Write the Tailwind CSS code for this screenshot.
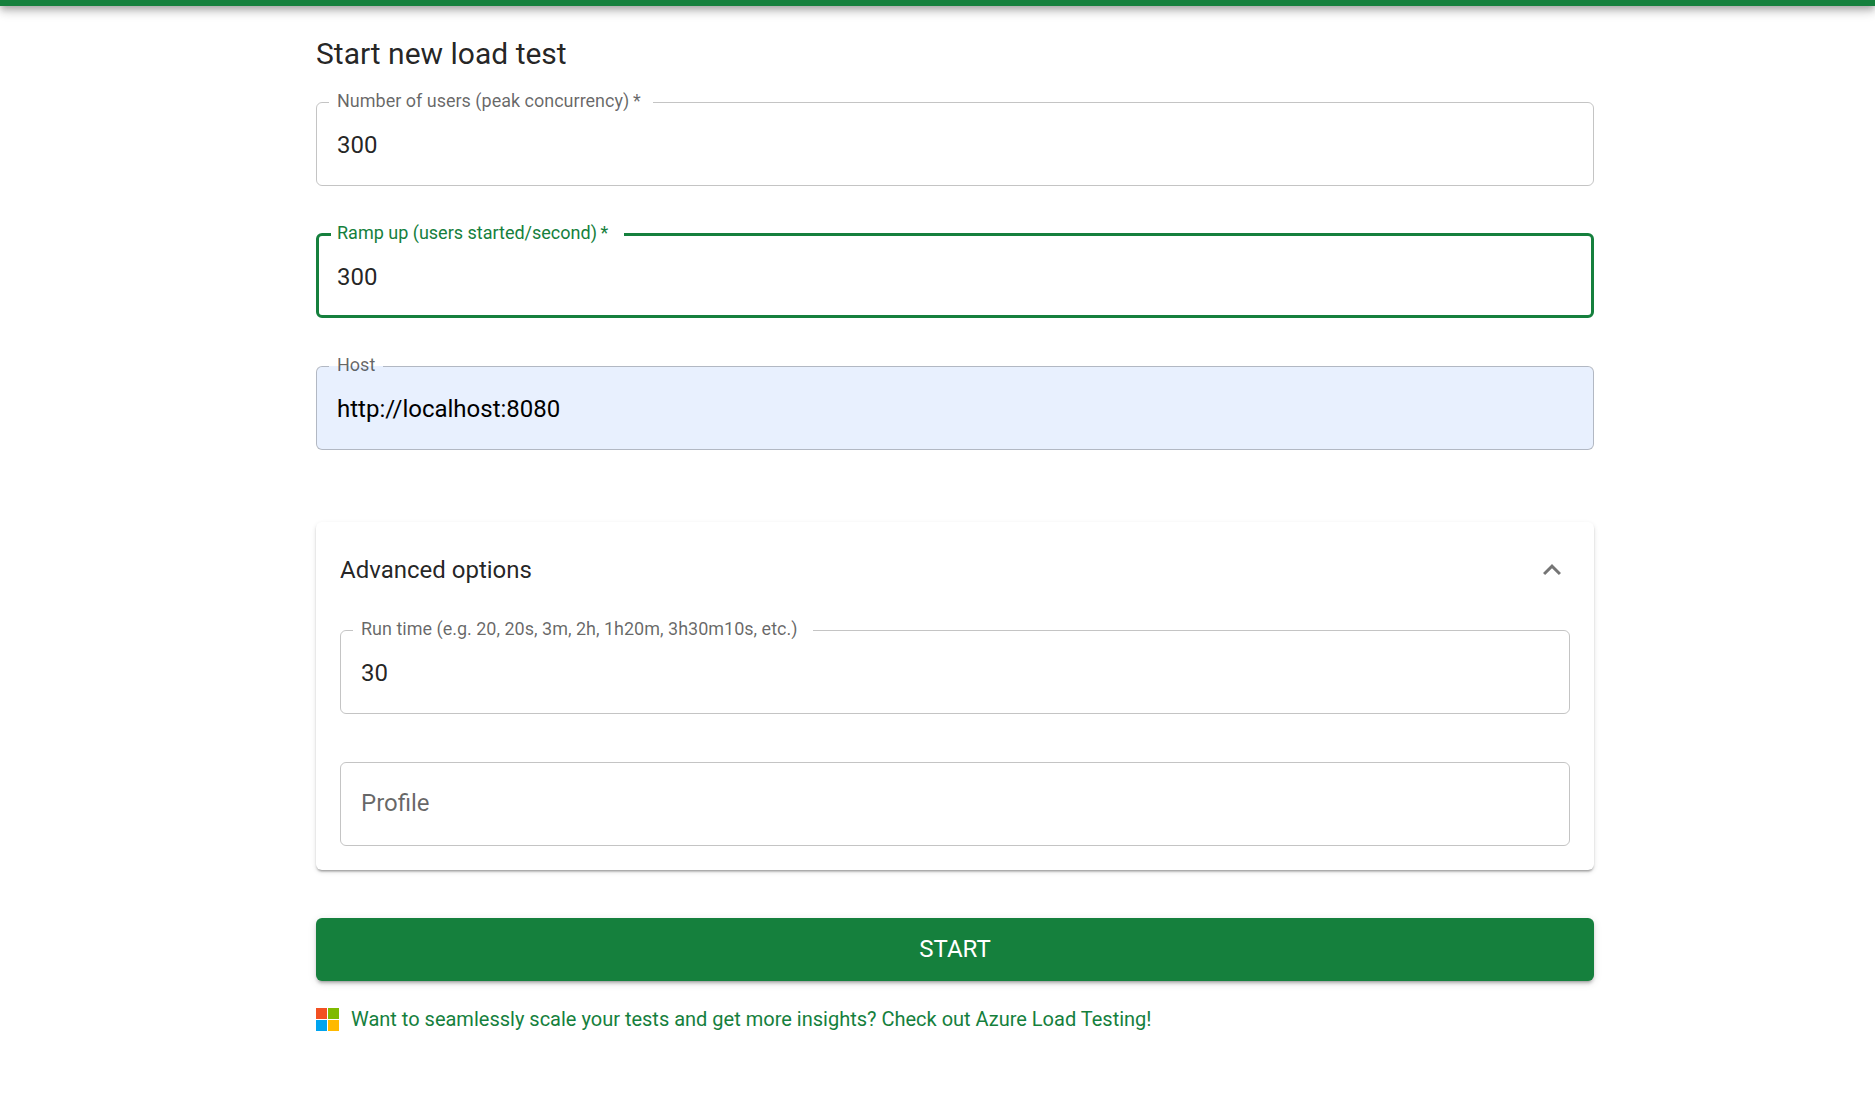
<!DOCTYPE html>
<html lang="en">
<head>
<meta charset="utf-8">
<meta name="viewport" content="width=device-width, initial-scale=1">
<title>Locust</title>
<script src="https://cdn.jsdelivr.net/npm/@tailwindcss/browser@4"></script>
</head>
<body class="min-h-screen bg-white font-['Roboto',sans-serif] text-2xl text-black/87">
<!-- App bar, mostly scrolled out of view -->
<header class="-mt-[90px] h-24 bg-[#15803d] shadow-[0_3px_6px_-1px_rgba(0,0,0,0.2),0_6px_8px_0_rgba(0,0,0,0.14),0_2px_15px_0_rgba(0,0,0,0.12)]"></header>
<main class="pl-[35px]">
  <form class="mx-auto flex max-w-[1350px] flex-col px-9 pt-6">
    <h1 class="mb-6 text-3xl leading-[48px]">Start new load test</h1>
    <div class="flex flex-col gap-12">
      <fieldset class="h-[84px] rounded-md border border-black/23">
        <legend class="ml-3 pr-3 pl-2 text-lg leading-px text-black/60"><label for="users" class="relative -top-0.5">Number of users (peak concurrency)&thinsp;*</label></legend>
        <input id="users" type="text" inputmode="numeric" required value="300" class="h-[82px] w-full rounded-md bg-transparent px-5 pt-0.5 outline-none">
      </fieldset>
      <fieldset class="-mt-px h-[85px] rounded-md border-3 border-[#15803d]">
        <legend class="ml-3 pr-4 pl-[6px] text-lg leading-[3px] text-[#15803d]"><label for="ramp" class="relative -top-0.5">Ramp up (users started/second)&thinsp;*</label></legend>
        <input id="ramp" type="text" inputmode="numeric" required value="300" class="h-[79px] w-full rounded-md bg-transparent px-[18px] pt-0.5 outline-none">
      </fieldset>
      <fieldset class="h-[84px] rounded-md border border-black/23 bg-[#e8f0fe]">
        <legend class="ml-3 px-2 text-lg leading-px text-black/60"><label for="host" class="relative -top-0.5">Host</label></legend>
        <input id="host" type="text" value="http://localhost:8080" class="h-[82px] w-full rounded-md bg-transparent px-5 pt-0.5 text-black outline-none">
      </fieldset>
    </div>
    <section class="mt-[72px] rounded-md px-6 pb-6 shadow-[0_3px_2px_-2px_rgba(0,0,0,0.2),0_2px_2px_0_rgba(0,0,0,0.14),0_2px_5px_0_rgba(0,0,0,0.12)]">
      <button type="button" aria-expanded="true" class="flex h-24 w-full items-center justify-between text-left">
        <span>Advanced options</span>
        <svg class="size-9 fill-black/54" viewBox="0 0 24 24" aria-hidden="true"><path d="M7.41 15.41 12 10.83l4.59 4.58L18 14l-6-6-6 6z"/></svg>
      </button>
      <div class="flex flex-col gap-12 pt-3">
        <fieldset class="h-[84px] rounded-md border border-black/23">
          <legend class="ml-3 pr-4 pl-2 text-lg leading-px text-black/60"><label for="runtime" class="relative -top-0.5">Run time (e.g. 20, 20s, 3m, 2h, 1h20m, 3h30m10s, etc.)</label></legend>
          <input id="runtime" type="text" value="30" class="h-[82px] w-full rounded-md bg-transparent px-5 pt-0.5 outline-none">
        </fieldset>
        <input id="profile" type="text" aria-label="Profile" placeholder="Profile" class="h-[84px] w-full rounded-md border border-black/23 bg-transparent px-5 pb-0.5 outline-none placeholder:text-black/60">
      </div>
    </section>
    <button type="submit" class="mt-12 h-[63px] rounded-md bg-[#15803d] pb-0.5 text-white shadow-[0_4px_2px_-3px_rgba(0,0,0,0.2),0_3px_3px_0_rgba(0,0,0,0.14),0_2px_8px_0_rgba(0,0,0,0.12)]">START</button>
    <a href="#azure" class="mt-6 flex items-center gap-3 self-start text-xl leading-7 text-[#15803d]">
      <svg class="size-[23px]" viewBox="0 0 23 23" aria-hidden="true"><path fill="#f25022" d="M0 0h11v11H0z"/><path fill="#7fba00" d="M12 0h11v11H12z"/><path fill="#00a4ef" d="M0 12h11v11H0z"/><path fill="#ffb900" d="M12 12h11v11H12z"/></svg>
      <span>Want to seamlessly scale your tests and get more insights? Check out Azure Load Testing!</span>
    </a>
  </form>
</main>
</body>
</html>
